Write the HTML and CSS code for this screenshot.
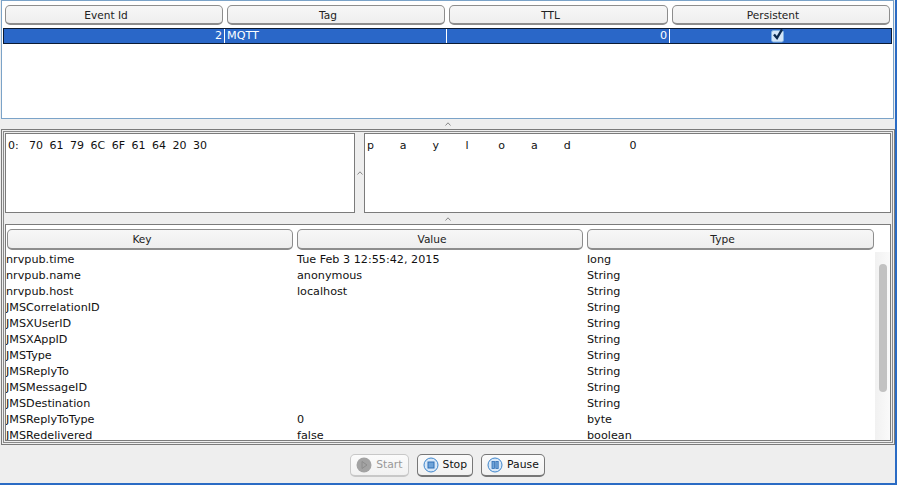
FILE: index.html
```html
<!DOCTYPE html>
<html>
<head>
<meta charset="utf-8">
<title>Events</title>
<link rel="stylesheet" href="styles.css">
</head>
<body>
<div class="window">
  <section class="events">
    <div class="heads events-heads">
      <div class="head">Event Id</div>
      <div class="head">Tag</div>
      <div class="head">TTL</div>
      <div class="head">Persistent</div>
    </div>
    <div class="selected-row">
      <div class="cell num">2</div>
      <div class="cell">MQTT</div>
      <div class="cell num">0</div>
      <div class="cell check">
        <svg width="14" height="14" viewBox="0 0 14 14">
          <rect x="0.5" y="1.5" width="12" height="11.5" rx="2" fill="#d3e5f8" stroke="#7fb0e0"/>
          <path d="M3 5.5 L6 9 L11 0.5" fill="none" stroke="#0c2a4e" stroke-width="2.4"/>
        </svg>
      </div>
    </div>
  </section>
  <div class="split split-top"><svg class="grip" width="6" height="4" viewBox="0 0 6 4"><path d="M0.5 3.5 L3 0.8 L5.5 3.5" fill="none" stroke="#888"/></svg></div>
  <section class="lower">
    <div class="lower-inner">
      <div class="payload">
        <div class="pane hex"><span class="prefix">0:</span>70 61 79 6C 6F 61 64 20 30</div>
        <div class="vsplit"><svg class="grip" width="6" height="4" viewBox="0 0 6 4"><path d="M0.5 3.5 L3 0.8 L5.5 3.5" fill="none" stroke="#888"/></svg></div>
        <div class="pane ascii"><span class="ch">p</span><span class="ch">a</span><span class="ch">y</span><span class="ch">l</span><span class="ch">o</span><span class="ch">a</span><span class="ch">d</span><span class="ch"></span><span class="ch">0</span></div>
      </div>
      <div class="split"><svg class="grip" width="6" height="4" viewBox="0 0 6 4"><path d="M0.5 3.5 L3 0.8 L5.5 3.5" fill="none" stroke="#888"/></svg></div>
      <div class="props">
        <div class="heads props-heads">
          <div class="head">Key</div>
          <div class="head">Value</div>
          <div class="head">Type</div>
        </div>
        <div class="props-body">
          <div class="rows">
            <div class="row"><span>nrvpub.time</span><span>Tue Feb 3 12:55:42, 2015</span><span>long</span></div>
            <div class="row"><span>nrvpub.name</span><span>anonymous</span><span>String</span></div>
            <div class="row"><span>nrvpub.host</span><span>localhost</span><span>String</span></div>
            <div class="row"><span>JMSCorrelationID</span><span></span><span>String</span></div>
            <div class="row"><span>JMSXUserID</span><span></span><span>String</span></div>
            <div class="row"><span>JMSXAppID</span><span></span><span>String</span></div>
            <div class="row"><span>JMSType</span><span></span><span>String</span></div>
            <div class="row"><span>JMSReplyTo</span><span></span><span>String</span></div>
            <div class="row"><span>JMSMessageID</span><span></span><span>String</span></div>
            <div class="row"><span>JMSDestination</span><span></span><span>String</span></div>
            <div class="row"><span>JMSReplyToType</span><span>0</span><span>byte</span></div>
            <div class="row"><span>JMSRedelivered</span><span>false</span><span>boolean</span></div>
          </div>
          <div class="track"><div class="thumb"></div></div>
        </div>
      </div>
    </div>
  </section>
  <footer class="controls">
    <button class="btn off"><svg width="16" height="16" viewBox="0 0 16 16"><circle cx="8" cy="8" r="7.5" fill="#a3a3a3"/><path d="M6 4.5 L11 8 L6 11.5Z" fill="none" stroke="#8c8c8c"/></svg>Start</button>
    <button class="btn"><svg width="16" height="16" viewBox="0 0 16 16"><circle cx="8" cy="8" r="7" fill="#d8e8f8" stroke="#3f86cc"/><rect x="5" y="5" width="6" height="6" fill="#6ea3d8" stroke="#2f6fb5"/></svg>Stop</button>
    <button class="btn"><svg width="16" height="16" viewBox="0 0 16 16"><circle cx="8" cy="8" r="7" fill="#d8e8f8" stroke="#3f86cc"/><rect x="5" y="4.5" width="2.4" height="7" fill="#6ea3d8" stroke="#2f6fb5" stroke-width="0.8"/><rect x="8.8" y="4.5" width="2.4" height="7" fill="#6ea3d8" stroke="#2f6fb5" stroke-width="0.8"/></svg>Pause</button>
  </footer>
</div>
</body>
</html>
```
FILE: styles.css
```css
* { box-sizing: border-box; }
html, body { margin: 0; padding: 0; }
body { width: 897px; height: 485px; overflow: hidden; background: #eeeeee; font-family: "DejaVu Sans", sans-serif; font-size: 11.2px; color: #111; }
.window { width: 897px; height: 485px; display: flex; flex-direction: column; padding-left: 1px; border-right: 2px solid #2a6bc4; border-bottom: 2px solid #2a6bc4; }

.events { height: 119px; width: 893px; flex: none; background: #fff; border: 1px solid #7ba3c8; padding: 4px 1px 0 1px; }
.heads { display: grid; }
.events-heads { grid-template-columns: 218px 218px 219px 218px; column-gap: 4px; padding-left: 2px; }
.props-heads { grid-template-columns: 286px 286px 287px; column-gap: 4px; padding-left: 1px; }
.head { height: 20px; padding-right: 16px; border: 1px solid #8d8d8d; border-bottom-width: 2px; border-radius: 5px; background: linear-gradient(#f7f7f7, #eeeeee); display: flex; align-items: center; justify-content: center; font-size: 10.6px; color: #222; }
.props-heads .head { height: 21px; }

.selected-row { margin-top: 3px; height: 16px; border: 1px solid #0b1b33; background: #2a67c8; color: #fff; display: grid; grid-template-columns: 221px 222px 223px 1fr; }
.cell { padding: 0 2px; line-height: 14px; border-right: 1px solid #fff; }
.num { text-align: right; }
.check { border: 0; display: flex; justify-content: center; padding: 0 5px 0 0; }

.split { height: 11px; flex: none; display: flex; justify-content: center; align-items: center; }
.split-top { height: 10px; }
.grip { display: block; flex: none; }

.lower { height: 316px; flex: none; border: 1px solid #7b7b7b; padding: 1px; }
.lower-inner { height: 100%; border: 1px solid #8a8a8a; padding: 1px; display: flex; flex-direction: column; }

.payload { display: flex; height: 80px; flex: none; }
.pane { background: #fff; border: 1px solid #7b7b7b; padding: 5px 2px; font-size: 11px; white-space: pre; }
.hex { width: 350px; word-spacing: 3px; flex: none; }
.prefix { display: inline-block; width: 21px; }
.vsplit { width: 9px; flex: none; display: flex; align-items: center; justify-content: center; }
.ascii { flex: 1; display: flex; align-items: flex-start; }
.ch { width: 32.8px; flex: none; }

.props { flex: 1; min-height: 0; background: #fff; border: 1px solid #7b7b7b; padding-top: 4px; display: flex; flex-direction: column; overflow: hidden; }
.props-body { display: flex; flex: 1; min-height: 0; }
.rows { flex: 1; padding-top: 2px; overflow: hidden; }
.row { display: grid; grid-template-columns: 291px 290px 1fr; height: 16px; line-height: 16px; }
.track { width: 15px; margin-top: 2px; background: linear-gradient(90deg, #f1f1f1, #fafafa); padding: 12px 3px 0 4px; flex: none; }
.thumb { width: 8px; height: 128px; border-radius: 4px; background: #c2c2c2; }

.controls { flex: 1; padding: 2px 1px 0 0; display: flex; justify-content: center; align-items: center; gap: 8px; }
.btn { height: 23px; display: flex; align-items: center; gap: 4px; padding: 0 5px; background: linear-gradient(#fbfbfb, #f1f1f1); border: 1px solid #777; border-bottom-width: 2px; border-radius: 5px; font: 10.8px "DejaVu Sans", sans-serif; color: #111; }
.off { color: #999; border-color: #c8c8c8; }
```
